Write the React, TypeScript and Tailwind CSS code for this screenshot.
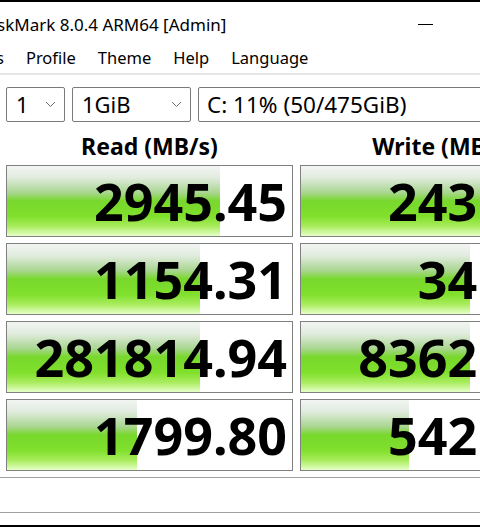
import React from "react";

type Row = { read: string; readBar: number; write: string; writeBar: number };

const rows: Row[] = [
  { read: "2945.45", readBar: 213, write: "2431.16", writeBar: 286 },
  { read: "1154.31", readBar: 193, write: "341.92", writeBar: 169 },
  { read: "281814.94", readBar: 193, write: "83621.07", writeBar: 169 },
  { read: "1799.80", readBar: 130, write: "5421.66", writeBar: 108 },
];

const meter =
  "bg-[linear-gradient(to_bottom,#f2f5f2_0%,#e2ece0_16%,#a9d690_38%,#78d82c_50%,#80e02c_72%,#a8ec5c_86%,#e6ffc8_100%)]";

const Chevron = () => (
  <svg width="11" height="7" viewBox="0 0 11 7" className="text-[#6d6d6d]">
    <polyline points="1,1 5.5,5.5 10,1" fill="none" stroke="currentColor" strokeWidth="1" />
  </svg>
);

const Cell = ({ value, bar }: { value: string; bar: number }) => (
  <div className="relative h-[72px] w-[287px] shrink-0 border border-[#808080] bg-white overflow-hidden">
    <div className={`absolute left-0 top-0 bottom-0 ${meter}`} style={{ width: bar }} />
    <div className="relative flex h-full items-center justify-end pr-[5px] text-[52px] font-bold leading-none text-black">
      {value}
    </div>
  </div>
);

export default function App() {
  return (
    <div
      className="w-[480px] h-[527px] overflow-hidden bg-white border-t-2 border-b-2 border-black"
      style={{ fontFamily: '"Noto Sans", "Open Sans", sans-serif' }}
    >
      <div className="w-[620px]">
        <div className="flex h-[42px] items-center pt-[3px] text-[17px] text-black">
          <span className="-ml-[3px] w-[421px]">skMark 8.0.4 ARM64 [Admin]</span>
          <span className="block h-px w-[15px] bg-black" />
        </div>
        <div className="flex h-[29px] items-center gap-[22px] -ml-[4px] text-[16.5px] text-black">
          <span>s</span>
          <span>Profile</span>
          <span>Theme</span>
          <span>Help</span>
          <span>Language</span>
        </div>
        <div className="h-[2px] bg-[#e6e6e6]" />
        <div className="flex gap-[7px] pl-[6px] pt-[12px] text-[22px] text-black">
          <div className="flex h-[35px] w-[59px] items-center justify-between rounded-[2px] border border-[#7a7a7a] pl-[9px] pr-[8px]">
            <span>1</span>
            <Chevron />
          </div>
          <div className="flex h-[35px] w-[119px] items-center justify-between rounded-[2px] border border-[#7a7a7a] pl-[9px] pr-[8px]">
            <span>1GiB</span>
            <Chevron />
          </div>
          <div className="flex h-[35px] w-[380px] items-center rounded-[2px] border border-[#7a7a7a] pl-[8px] text-[22.5px]">
            <span>C: 11% (50/475GiB)</span>
          </div>
        </div>
        <div className="flex h-[43px] items-center gap-[7px] pl-[6px] pt-[5px] text-[23px] font-bold text-black">
          <div className="w-[287px] text-center">Read (MB/s)</div>
          <div className="w-[287px] text-center">Write (MB/s)</div>
        </div>
        <div className="flex flex-col gap-[6px] pl-[6px]">
          {rows.map((r) => (
            <div key={r.read} className="flex gap-[7px]">
              <Cell value={r.read} bar={r.readBar} />
              <Cell value={r.write} bar={r.writeBar} />
            </div>
          ))}
        </div>
        <div className="mt-[6px] h-px bg-[#a0a0a0]" />
        <div className="h-[34px]" />
        <div className="h-px bg-[#a0a0a0]" />
      </div>
    </div>
  );
}
